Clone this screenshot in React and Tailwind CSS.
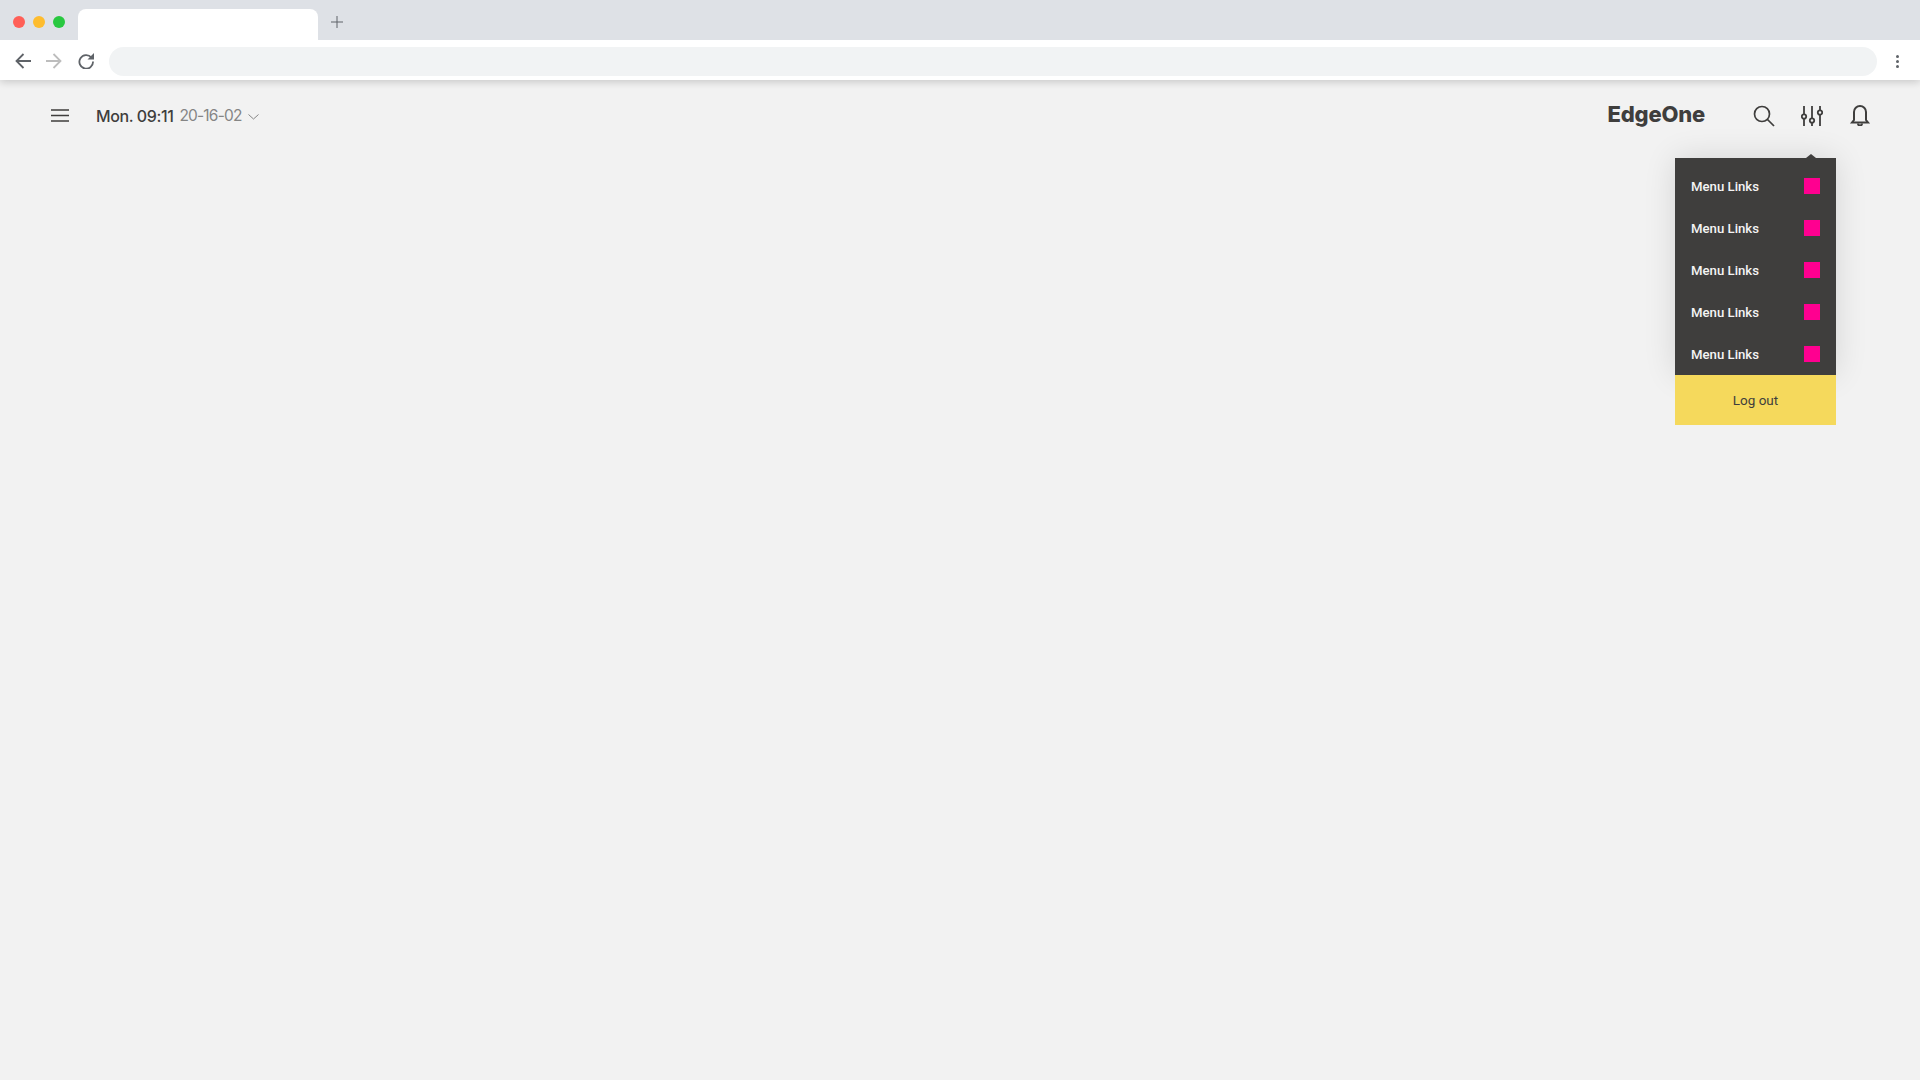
const links = ["Menu Links", "Menu Links", "Menu Links", "Menu Links", "Menu Links"];

function BrowserBar() {
    return (
        <div className="relative z-10 shadow-[0_2px_8px_rgba(0,0,0,0.18)]">
            <div className="h-10 bg-[#dee1e6] flex items-end">
                <div className="flex items-center gap-2 pl-[13px] pr-[13px] h-full pt-[4px]">
                    <span className="w-3 h-3 rounded-full bg-[#ff5f57]" />
                    <span className="w-3 h-3 rounded-full bg-[#febc2e]" />
                    <span className="w-3 h-3 rounded-full bg-[#28c840]" />
                </div>
                <div className="w-[240px] h-[31px] bg-white rounded-t-[8px]" />
                <svg className="ml-[12px] mb-[11px]" width="14" height="14" viewBox="0 0 14 14" fill="none" stroke="#5f6368" strokeWidth="1">
                    <path d="M7 1v12M1 7h12" />
                </svg>
            </div>
            <div className="h-10 bg-white flex items-center pl-[15px] pt-[3px]">
                <svg className="-mt-[1px]" width="16" height="16" viewBox="0 0 16 16" fill="none" stroke="#5f6368" strokeWidth="1.8">
                    <path d="M16 8H1.5M8.5 1L1.5 8l7 7" />
                </svg>
                <svg className="ml-[15px] -mt-[1px]" width="16" height="16" viewBox="0 0 16 16" fill="none" stroke="#bdbdbd" strokeWidth="1.8">
                    <path d="M0 8h14.5M7.5 1l7 7-7 7" />
                </svg>
                <svg className="ml-[16px] -mt-[1px]" width="16" height="16" viewBox="0 0 16 16" fill="none">
                    <path d="M13.4 4.5A6.8 6.8 0 1 0 15 8.5" stroke="#5f6368" strokeWidth="1.8" />
                    <path d="M16 0v6.5H9.5z" fill="#5f6368" />
                </svg>
                <div className="ml-[15px] flex-1 h-[29px] rounded-full bg-[#f1f3f4]" />
                <div className="w-[41px] -mt-[1px] flex flex-col items-center gap-[2px]">
                    <span className="w-[3px] h-[3px] rounded-full bg-[#5f6368]" />
                    <span className="w-[3px] h-[3px] rounded-full bg-[#5f6368]" />
                    <span className="w-[3px] h-[3px] rounded-full bg-[#5f6368]" />
                </div>
                <div className="w-[2px]" />
            </div>
        </div>
    );
}

function Header() {
    return (
        <div className="h-[71px] flex items-center pl-[51px] pr-[49px] font-['Inter',sans-serif]">
            <svg width="18" height="13" viewBox="0 0 18 13" fill="none" stroke="#3f3e3d" strokeWidth="1.4">
                <path d="M0 1h18M0 6.5h18M0 12h18" />
            </svg>
            <span className="ml-[27px] text-[16px] font-medium text-[#3f3e3d] tracking-[-0.4px]">Mon. 09:11</span>
            <span className="ml-[6px] mt-[1px] text-[15.5px] text-[#858585] tracking-[-0.8px]">20-16-02</span>
            <svg className="ml-[6px] mt-[2px]" width="11" height="6" viewBox="0 0 11 6" fill="none" stroke="#858585" strokeWidth="1">
                <path d="M0.5 0.5l5 4.5 5-4.5" />
            </svg>
            <span className="ml-auto text-[22px] font-extrabold text-[#3f3e3d] tracking-[-0.2px] -mt-[3px]">EdgeOne</span>
            <div className="ml-[48px] flex items-center gap-[26px]">
                <svg width="22" height="22" viewBox="0 0 22 22" fill="none" stroke="#3f3e3d">
                    <circle cx="9" cy="9" r="7.5" strokeWidth="1.7" />
                    <path d="M14.5 14.5l6.5 6.5" strokeWidth="1.7" />
                </svg>
                <svg width="22" height="22" viewBox="0 0 22 22" fill="none" stroke="#3f3e3d" strokeWidth="1.8">
                    <path d="M3 1v8M3 14v7M11 1v12M11 18v3M19 1v4M19 10v11" />
                    <circle cx="3" cy="11.5" r="2.2" />
                    <circle cx="11" cy="15.5" r="2.2" />
                    <circle cx="19" cy="7.5" r="2.2" />
                </svg>
                <svg className="-mt-[1px]" width="22" height="22" viewBox="0 0 22 22" fill="none" stroke="#3f3e3d" strokeWidth="2">
                    <path d="M5 16V8a6 6 0 0 1 12 0v8l2 2.5H3z" />
                    <path d="M9 19.5a2 2 0 0 0 4 0" />
                </svg>
            </div>
        </div>
    );
}

function DropMenu() {
    return (
        <div className="absolute right-[84px] top-[158px] w-[161px] font-['Roboto',sans-serif]">
            <div className="absolute right-[20px] -top-[4px] w-0 h-0 border-x-[5px] border-x-transparent border-b-[4px] border-b-[#3f3e3d]" />
            <div className="bg-[#3f3e3d] pt-[7px] shadow-[0_0_30px_rgba(0,0,0,0.12)]">
                {links.map((label, i) => (
                    <div key={i} className="h-[42px] flex items-center justify-between pl-[16px] pr-[16px]">
                        <span className="text-[13.2px] font-medium text-[#f4f4f4] mt-[1px]">{label}</span>
                        <span className="w-4 h-4 bg-[#ff0090]" />
                    </div>
                ))}
            </div>
            <div className="relative h-[50px] bg-[#f5d95c] flex items-center justify-center text-[13.5px] text-[#3f3e3d]">
                Log out
            </div>
        </div>
    );
}

export default function App() {
    return (
        <div className="relative min-h-screen bg-[#f2f2f2]">
            <BrowserBar />
            <Header />
            <DropMenu />
        </div>
    );
}
